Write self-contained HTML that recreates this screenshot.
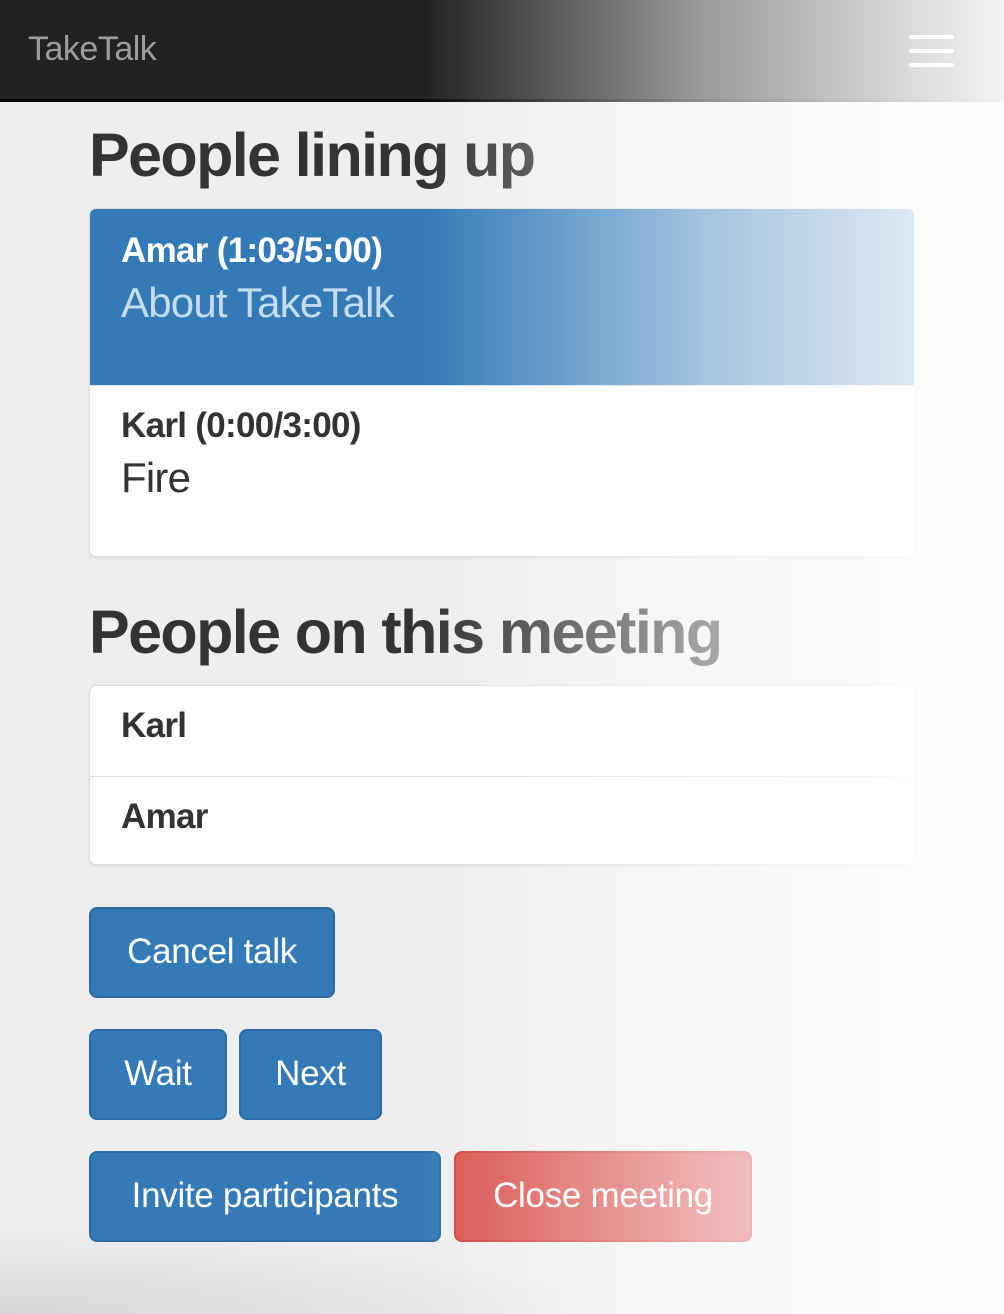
<!DOCTYPE html>
<html><head><style>
*{box-sizing:border-box;margin:0;padding:0}
body{width:1004px;height:1314px;overflow:hidden;background:#eee;font-family:"Liberation Sans",sans-serif;color:#333;position:relative}
.nav{position:absolute;left:0;top:0;width:1004px;height:102px;background:#222;border-bottom:3px solid #080808}
.brand{position:absolute;left:28px;top:30px;font-size:34px;color:#9d9d9d;letter-spacing:-0.5px}
.burger{position:absolute;left:909px;top:35px;width:45px}
.burger i{display:block;height:4px;background:#fff;margin-bottom:10px;border-radius:2px}
h1{position:absolute;left:89px;font-size:61px;font-weight:bold;color:#333;letter-spacing:-1.6px}
.list{position:absolute;left:89px;width:826px;border-radius:7px;background:#fff;box-shadow:0 1px 2px rgba(0,0,0,.1);border:1px solid #ddd;overflow:hidden}
.it{position:relative;border-top:1px solid #ddd;padding:0 31px}
.it:first-child{border-top:none}
.act{background:#337ab7;color:#fff}
.it b{display:block;font-size:35px;letter-spacing:-0.7px}
.it span{display:block;font-size:42px;font-weight:300;letter-spacing:-0.8px}
.btn{position:absolute;height:91px;background:#337ab7;border:2px solid #2e6da4;border-radius:8px;color:#fff;font-size:35px;text-align:center;line-height:86px;letter-spacing:-0.3px}
.red{background:#d9534f;border-color:#d43f3a}
.ov{position:absolute;left:0;top:0;width:1004px;height:1314px;pointer-events:none;background:linear-gradient(to right,rgba(255,255,255,0) 42%,rgba(255,255,255,.55) 70%,rgba(255,255,255,.85) 92%,rgba(255,255,255,.95) 100%)}
.ov2{position:absolute;left:0;top:1230px;width:900px;height:84px;pointer-events:none;background:radial-gradient(ellipse 600px 84px at 0 100%,rgba(0,0,0,.1),rgba(0,0,0,0))}
</style></head><body>
<div class="nav"><div class="brand">TakeTalk</div><div class="burger"><i></i><i></i><i></i></div></div>
<h1 style="top:120px">People lining up</h1>
<div class="list" style="top:208px;height:349px">
<div class="it act" style="height:176px;padding-top:22px"><b>Amar (1:03/5:00)</b><span style="color:#c6dcef;margin-top:8px">About TakeTalk</span></div>
<div class="it" style="height:173px;padding-top:20px"><b>Karl (0:00/3:00)</b><span style="margin-top:8px">Fire</span></div>
</div>
<h1 style="top:597px">People on this meeting</h1>
<div class="list" style="top:685px;height:180px">
<div class="it" style="height:90px;padding-top:20px"><b>Karl</b></div>
<div class="it" style="height:89px;padding-top:20px"><b>Amar</b></div>
</div>
<div class="btn" style="left:89px;top:907px;width:246px">Cancel talk</div>
<div class="btn" style="left:89px;top:1029px;width:138px">Wait</div>
<div class="btn" style="left:239px;top:1029px;width:143px">Next</div>
<div class="btn" style="left:89px;top:1151px;width:352px">Invite participants</div>
<div class="btn red" style="left:454px;top:1151px;width:298px">Close meeting</div>
<div class="ov"></div><div class="ov2"></div>
</body></html>
